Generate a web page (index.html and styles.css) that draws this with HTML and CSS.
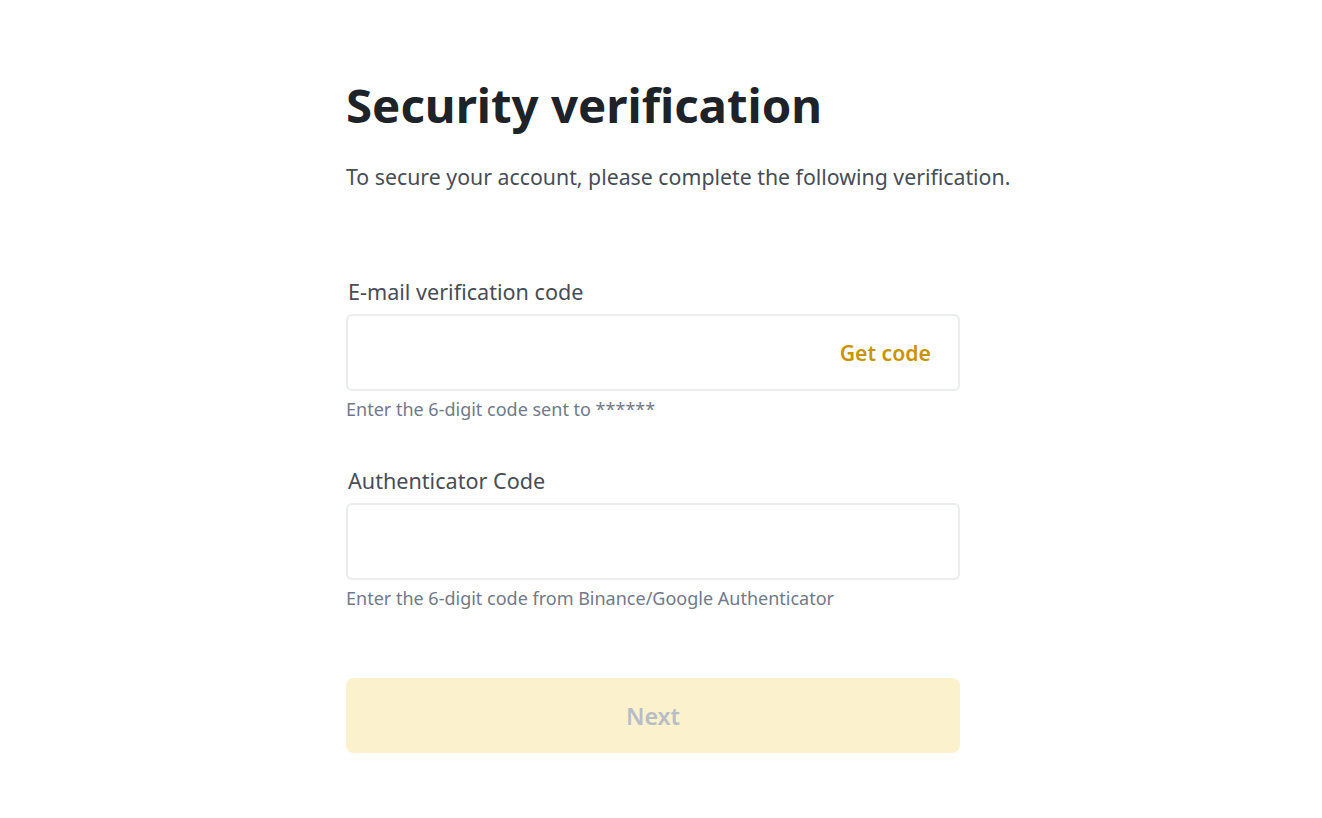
FILE: index.html
```html
<!DOCTYPE html>
<html lang="en">
<head>
<meta charset="utf-8">
<title>Security verification</title>
<link rel="stylesheet" href="styles.css">
</head>
<body>
<main class="page">
  <h1 class="title">Security verification</h1>
  <p class="subtitle">To secure your account, please complete the following verification.</p>
  <form class="form">
    <div class="field">
      <label class="label">E-mail verification code</label>
      <div class="input">
        <span class="input-fill"></span>
        <span class="get-code">Get code</span>
      </div>
      <div class="hint">Enter the 6-digit code sent to ******</div>
    </div>
    <div class="field">
      <label class="label">Authenticator Code</label>
      <div class="input"></div>
      <div class="hint">Enter the 6-digit code from Binance/Google Authenticator</div>
    </div>
    <div class="button">Next</div>
  </form>
</main>
</body>
</html>
```
FILE: styles.css
```css
html, body {
  margin: 0;
  padding: 0;
  background: #ffffff;
}
body {
  font-family: "Noto Sans", "Open Sans", sans-serif;
}
.page {
  width: 630px;
  margin: 0 auto;
  padding-top: 72px;
}
.title {
  margin: 0;
  font-size: 47.4px;
  line-height: 66px;
  font-weight: 700;
  color: #1E2329;
}
.subtitle {
  margin: 25px 0 0;
  font-size: 21.3px;
  line-height: 28px;
  color: #474D57;
  white-space: nowrap;
}
.form {
  width: 614px;
  margin-top: 87px;
  display: flex;
  flex-direction: column;
  gap: 46px;
}
.field {
  display: flex;
  flex-direction: column;
}
.label {
  padding-left: 2px;
  font-size: 21.6px;
  line-height: 28px;
  color: #474D57;
  margin-bottom: 8px;
}
.input {
  box-sizing: border-box;
  height: 77px;
  border: 2px solid #EAECEF;
  border-radius: 6px;
  display: flex;
  align-items: center;
  padding: 0 27px 0 16px;
}
.input-fill {
  flex: 1;
}
.get-code {
  font-size: 21.2px;
  font-weight: 600;
  color: #C99400;
}
.hint {
  margin-top: 6px;
  font-size: 18px;
  line-height: 24px;
  color: #707A8A;
}
.button {
  margin-top: 22px;
  height: 75px;
  border-radius: 8px;
  background: #FCF1CD;
  color: #B7BDC6;
  font-size: 23.3px;
  font-weight: 600;
  display: flex;
  align-items: center;
  justify-content: center;
}
```
